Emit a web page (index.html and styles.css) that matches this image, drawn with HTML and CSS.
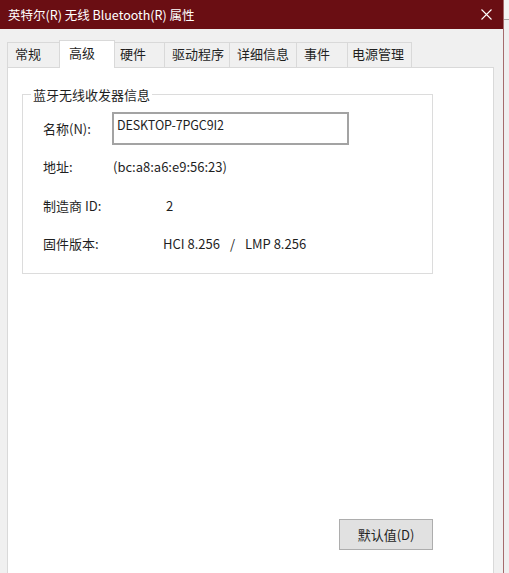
FILE: index.html
```html
<!DOCTYPE html>
<html lang="zh-CN">
<head>
<meta charset="utf-8">
<title>英特尔(R) 无线 Bluetooth(R) 属性</title>
<link rel="stylesheet" href="styles.css">
</head>
<body>
<div class="screen">
  <div class="window">
    <div class="titlebar">
      <span class="title">英特尔(R) 无线 Bluetooth(R) 属性</span>
      <svg class="close" width="11" height="11" viewBox="0 0 11 11" aria-hidden="true">
        <path d="M0.5 0.5 L10.5 10.5 M10.5 0.5 L0.5 10.5" stroke="#ffffff" stroke-width="1.1" fill="none"/>
      </svg>
    </div>
    <div class="body">
      <div class="tabs">
        <div class="tab t1">常规</div>
        <div class="tab t2 active">高级</div>
        <div class="tab t3">硬件</div>
        <div class="tab t4">驱动程序</div>
        <div class="tab t5">详细信息</div>
        <div class="tab t6">事件</div>
        <div class="tab t7">电源管理</div>
      </div>
      <div class="panel">
        <fieldset class="group">
          <legend>蓝牙无线收发器信息</legend>
          <div class="row name-row">
            <span class="label">名称(N):</span>
            <div class="input">DESKTOP-7PGC9I2</div>
          </div>
          <div class="row addr-row">
            <span class="label">地址:</span>
            <span class="value">(bc:a8:a6:e9:56:23)</span>
          </div>
          <div class="row id-row">
            <span class="label">制造商 ID:</span>
            <span class="value">2</span>
          </div>
          <div class="row fw-row">
            <span class="label">固件版本:</span>
            <span class="value">HCI 8.256 <span class="sep">/</span> LMP 8.256</span>
          </div>
        </fieldset>
        <div class="actions">
          <button class="btn" type="button">默认值(D)</button>
        </div>
      </div>
    </div>
  </div>
  <div class="edge"></div>
  <div class="outside"></div>
</div>
</body>
</html>
```

FILE: styles.css
```css
html, body {
  margin: 0;
  padding: 0;
}

body {
  background: #f4f4f4;
  font-family: "Noto Sans CJK SC", "Microsoft YaHei", "Noto Sans", sans-serif;
  font-size: 13px;
  color: #1f1f1f;
  overflow: hidden;
}

.screen {
  display: flex;
  width: 509px;
  height: 573px;
  overflow: hidden;
}

.window {
  width: 503px;
  flex: none;
  display: flex;
  flex-direction: column;
  background: #f0f0f0;
}

.edge {
  width: 1px;
  flex: none;
  background: #a56b6d;
}

.outside {
  flex: 1;
  margin-top: 19px;
  border-top: 1px solid #a9a9a9;
  background: #efefef;
}

/* title bar */
.titlebar {
  height: 29px;
  flex: none;
  display: flex;
  align-items: center;
  padding-left: 8px;
  background: #6a0e13;
  color: #ffffff;
  font-size: 12.5px;
}

.title {
  line-height: 17px;
}

.close {
  margin-left: auto;
  margin-right: 11px;
}

/* body */
.body {
  flex: 1;
  display: flex;
  flex-direction: column;
  padding: 11px 9px 0 7px;
}

.tabs {
  display: flex;
  align-items: flex-end;
  height: 27px;
  flex: none;
}

.tab {
  box-sizing: border-box;
  height: 25px;
  padding-left: 7px;
  border: 1px solid #d9d9d9;
  border-bottom: none;
  margin-right: -1px;
  line-height: 22px;
  background: #f0f0f0;
  white-space: nowrap;
}

.tab.active {
  position: relative;
  z-index: 1;
  height: 28px;
  margin-bottom: -1px;
  background: #ffffff;
  line-height: 23px;
  padding-left: 9px;
}

.t1 { width: 53px; }
.t2 { width: 56px; }
.t3 { width: 51px; padding-left: 5px; }
.t4 { width: 66px; }
.t5 { width: 68px; }
.t6 { width: 52px; }
.t7 { width: 65px; padding-left: 4px; }

.panel {
  flex: 1;
  background: #ffffff;
  border: 1px solid #d9d9d9;
  border-bottom: none;
  padding: 18px 0 0 14px;
}

/* group box */
.group {
  box-sizing: border-box;
  width: 411px;
  margin: 0;
  padding: 0 0 19px 8px;
  border: 1px solid #dcdcdc;
  min-inline-size: 0;
}

.group legend {
  padding: 0 2px;
  line-height: 17px;
  color: #1f1f1f;
}

.row {
  display: flex;
  align-items: center;
  margin-left: 12px;
  line-height: 20px;
  white-space: nowrap;
}

.name-row {
  margin-top: 9px;
}

.name-row .label { width: 69px; }

.input {
  box-sizing: border-box;
  width: 237px;
  height: 33px;
  border: 2px solid #a3a3a3;
  padding: 1px 0 0 3px;
  line-height: 20px;
  font-size: 12.5px;
  letter-spacing: -0.1px;
  align-self: flex-start;
}

.addr-row { margin-top: 12px; }
.addr-row .label { width: 70px; }

.id-row { margin-top: 19px; }
.id-row .label { width: 123px; }

.fw-row { margin-top: 18px; }
.fw-row .label { width: 120px; }

.sep {
  margin: 0 7px;
}

/* button */
.actions {
  width: 411px;
  display: flex;
  justify-content: flex-end;
  margin-top: 245px;
}

.btn {
  box-sizing: border-box;
  width: 94px;
  height: 31px;
  margin: 0;
  background: #e1e1e1;
  border: 1px solid #adadad;
  border-radius: 0;
  font-family: inherit;
  font-size: 13px;
  color: #1f1f1f;
  padding: 0;
}
```
